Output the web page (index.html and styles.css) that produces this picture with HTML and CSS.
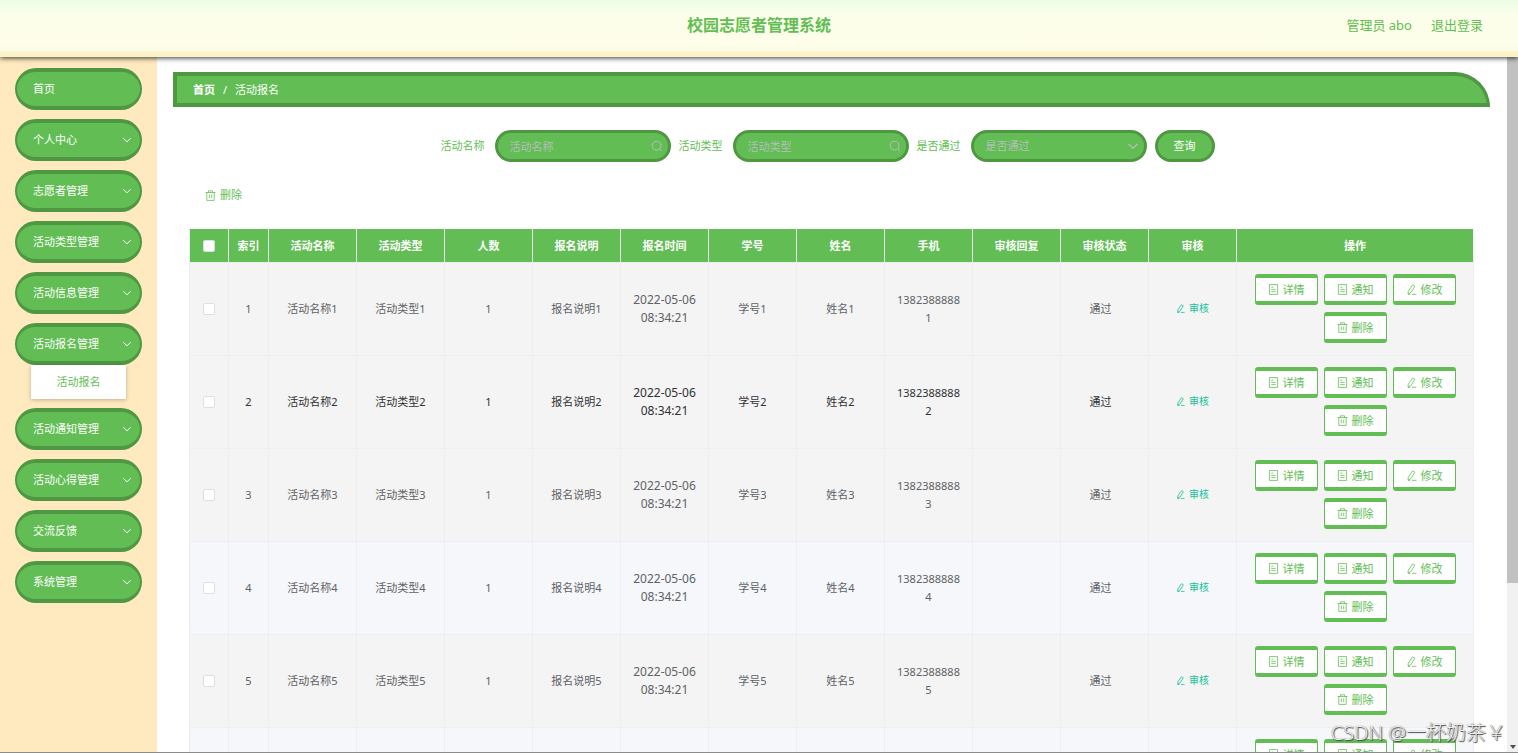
FILE: index.html
```html
<!DOCTYPE html>
<html lang="zh-CN">
<head>
<meta charset="utf-8">
<title>校园志愿者管理系统</title>
<link rel="stylesheet" href="styles.css">
</head>
<body>
<svg class="sprite" aria-hidden="true">
  <symbol id="down" viewBox="0 0 10 10"><path d="M1.2 3.2 5 6.8 8.8 3.2"/></symbol>
  <symbol id="search" viewBox="0 0 12 12"><circle cx="5.6" cy="5.6" r="4.4"/><path d="M8.8 8.8 11 11"/></symbol>
  <symbol id="trash" viewBox="0 0 11 11"><path d="M.5 2.5h10M3.5 2.5V.8h4v1.7M1.8 2.5v7.9h7.4V2.5M4.3 4.6v3.6M6.7 4.6v3.6"/></symbol>
  <symbol id="doc" viewBox="0 0 11 11"><path d="M1.4.6h8.2v9.8H1.4zM3.3 3.2h2M3.3 5.4h4.4M3.3 7.6h4.4"/></symbol>
  <symbol id="edit" viewBox="0 0 11 11"><path d="M6.7.9 8.9 2.2 4.9 8.6 2 10.2 2.3 7.2zM2 10.3h2.2M6 10.3h4.4"/></symbol>
</svg>
<header class="topbar">
  <h1 class="title">校园志愿者管理系统</h1>
  <nav class="account"><a href="#">管理员 abo</a><a href="#">退出登录</a></nav>
</header>
<div class="layout">
  <aside class="sidebar">
    <ul class="menu">
      <li><button class="menu-item" type="button">首页</button></li>
      <li><button class="menu-item" type="button">个人中心<svg class="chevron"><use href="#down"/></svg></button></li>
      <li><button class="menu-item" type="button">志愿者管理<svg class="chevron"><use href="#down"/></svg></button></li>
      <li><button class="menu-item" type="button">活动类型管理<svg class="chevron"><use href="#down"/></svg></button></li>
      <li><button class="menu-item" type="button">活动信息管理<svg class="chevron"><use href="#down"/></svg></button></li>
      <li><button class="menu-item" type="button">活动报名管理<svg class="chevron"><use href="#down"/></svg></button><a class="submenu" href="#">活动报名</a></li>
      <li><button class="menu-item" type="button">活动通知管理<svg class="chevron"><use href="#down"/></svg></button></li>
      <li><button class="menu-item" type="button">活动心得管理<svg class="chevron"><use href="#down"/></svg></button></li>
      <li><button class="menu-item" type="button">交流反馈<svg class="chevron"><use href="#down"/></svg></button></li>
      <li><button class="menu-item" type="button">系统管理<svg class="chevron"><use href="#down"/></svg></button></li>
    </ul>
  </aside>
  <main class="main">
    <nav class="breadcrumb"><a href="#"><b>首页</b></a><span>/</span><span>活动报名</span></nav>
    <form class="filters">
      <label for="name">活动名称</label>
      <div class="field"><input id="name" type="text" placeholder="活动名称"><svg class="field-icon"><use href="#search"/></svg></div>
      <label for="type">活动类型</label>
      <div class="field"><input id="type" type="text" placeholder="活动类型"><svg class="field-icon"><use href="#search"/></svg></div>
      <label for="passed">是否通过</label>
      <div class="field"><select id="passed"><option>是否通过</option></select><svg class="field-icon"><use href="#down"/></svg></div>
      <button class="query" type="button">查询</button>
    </form>
    <button class="bulk-delete" type="button"><svg class="icon"><use href="#trash"/></svg>删除</button>
    <table class="grid">
      <colgroup><col class="col-check"><col class="col-index"><col class="col-data" span="11"><col></colgroup>
      <thead><tr><th><input type="checkbox" aria-label="全选"></th><th>索引</th><th>活动名称</th><th>活动类型</th><th>人数</th><th>报名说明</th><th>报名时间</th><th>学号</th><th>姓名</th><th>手机</th><th>审核回复</th><th>审核状态</th><th>审核</th><th>操作</th></tr></thead>
      <tbody>
        <tr><td><input type="checkbox" aria-label="选择1"></td><td>1</td><td>活动名称1</td><td>活动类型1</td><td>1</td><td>报名说明1</td><td class="time">2022-05-06 08:34:21</td><td>学号1</td><td>姓名1</td><td>13823888881</td><td></td><td><span class="status">通过</span></td><td><button class="audit" type="button"><svg class="icon"><use href="#edit"/></svg>审核</button></td>
          <td><div class="actions"><button type="button"><svg class="icon"><use href="#doc"/></svg>详情</button><button type="button"><svg class="icon"><use href="#doc"/></svg>通知</button><button type="button"><svg class="icon"><use href="#edit"/></svg>修改</button><button type="button"><svg class="icon"><use href="#trash"/></svg>删除</button></div></td></tr>
        <tr class="current"><td><input type="checkbox" aria-label="选择2"></td><td>2</td><td>活动名称2</td><td>活动类型2</td><td>1</td><td>报名说明2</td><td class="time">2022-05-06 08:34:21</td><td>学号2</td><td>姓名2</td><td>13823888882</td><td></td><td><span class="status">通过</span></td><td><button class="audit" type="button"><svg class="icon"><use href="#edit"/></svg>审核</button></td>
          <td><div class="actions"><button type="button"><svg class="icon"><use href="#doc"/></svg>详情</button><button type="button"><svg class="icon"><use href="#doc"/></svg>通知</button><button type="button"><svg class="icon"><use href="#edit"/></svg>修改</button><button type="button"><svg class="icon"><use href="#trash"/></svg>删除</button></div></td></tr>
        <tr><td><input type="checkbox" aria-label="选择3"></td><td>3</td><td>活动名称3</td><td>活动类型3</td><td>1</td><td>报名说明3</td><td class="time">2022-05-06 08:34:21</td><td>学号3</td><td>姓名3</td><td>13823888883</td><td></td><td><span class="status">通过</span></td><td><button class="audit" type="button"><svg class="icon"><use href="#edit"/></svg>审核</button></td>
          <td><div class="actions"><button type="button"><svg class="icon"><use href="#doc"/></svg>详情</button><button type="button"><svg class="icon"><use href="#doc"/></svg>通知</button><button type="button"><svg class="icon"><use href="#edit"/></svg>修改</button><button type="button"><svg class="icon"><use href="#trash"/></svg>删除</button></div></td></tr>
        <tr class="tinted"><td><input type="checkbox" aria-label="选择4"></td><td>4</td><td>活动名称4</td><td>活动类型4</td><td>1</td><td>报名说明4</td><td class="time">2022-05-06 08:34:21</td><td>学号4</td><td>姓名4</td><td>13823888884</td><td></td><td><span class="status">通过</span></td><td><button class="audit" type="button"><svg class="icon"><use href="#edit"/></svg>审核</button></td>
          <td><div class="actions"><button type="button"><svg class="icon"><use href="#doc"/></svg>详情</button><button type="button"><svg class="icon"><use href="#doc"/></svg>通知</button><button type="button"><svg class="icon"><use href="#edit"/></svg>修改</button><button type="button"><svg class="icon"><use href="#trash"/></svg>删除</button></div></td></tr>
        <tr><td><input type="checkbox" aria-label="选择5"></td><td>5</td><td>活动名称5</td><td>活动类型5</td><td>1</td><td>报名说明5</td><td class="time">2022-05-06 08:34:21</td><td>学号5</td><td>姓名5</td><td>13823888885</td><td></td><td><span class="status">通过</span></td><td><button class="audit" type="button"><svg class="icon"><use href="#edit"/></svg>审核</button></td>
          <td><div class="actions"><button type="button"><svg class="icon"><use href="#doc"/></svg>详情</button><button type="button"><svg class="icon"><use href="#doc"/></svg>通知</button><button type="button"><svg class="icon"><use href="#edit"/></svg>修改</button><button type="button"><svg class="icon"><use href="#trash"/></svg>删除</button></div></td></tr>
        <tr class="tinted"><td></td><td></td><td></td><td></td><td></td><td></td><td></td><td></td><td></td><td></td><td></td><td></td><td></td>
          <td><div class="actions"><button type="button"><svg class="icon"><use href="#doc"/></svg>详情</button><button type="button"><svg class="icon"><use href="#doc"/></svg>通知</button><button type="button"><svg class="icon"><use href="#edit"/></svg>修改</button><button type="button"><svg class="icon"><use href="#trash"/></svg>删除</button></div></td></tr>
      </tbody>
    </table>
  </main>
  <div class="scrollbar"><div class="thumb"></div><div class="arrow"></div></div>
</div>
<div class="watermark">CSDN @一杯奶茶￥</div>
</body>
</html>
```
FILE: styles.css
```css
* { box-sizing: border-box; }

:root {
  --green: #62be54;
  --dark: #4f9743;
  --line: #ebeef5;
}

body {
  margin: 0;
  height: 100vh;
  overflow: hidden;
  display: flex;
  flex-direction: column;
  border-bottom: 1px solid #8c8c8c;
  color: #606266;
  font: 11px/18px "Noto Sans", "Noto Sans CJK SC", sans-serif;
}

button, input, select { font: inherit; }
button { cursor: pointer; }
a { color: inherit; text-decoration: none; }

svg {
  fill: none;
  stroke: currentColor;
  flex: none;
}
.sprite { position: absolute; width: 0; height: 0; }
.icon { width: 11px; height: 11px; stroke-width: 0.8; }

.topbar {
  position: relative;
  z-index: 1;
  flex: none;
  display: grid;
  grid-template-columns: 1fr auto 1fr;
  align-items: center;
  height: 57px;
  padding: 0 35px 7px;
  color: var(--green);
  background: linear-gradient(#ecfde6, #fbfee9 25%, #fefeea 75%, #fafce5 89%, #fdf3c6 92%, #fbf2c8);
  box-shadow: 0 1px 5px rgba(0, 0, 0, 0.8);
}
.title { grid-column: 2; margin: 0; font-size: 16px; line-height: 24px; }
.account { display: flex; justify-content: flex-end; gap: 19px; font-size: 13px; }

.layout { flex: 1; min-height: 0; display: flex; }

.sidebar { flex: none; width: 157px; padding: 11px 15px; background: #ffeabf; }
.menu {
  display: flex;
  flex-direction: column;
  gap: 9px;
  margin: 0;
  padding: 0;
  list-style: none;
}
.menu-item {
  display: flex;
  align-items: center;
  justify-content: space-between;
  width: 100%;
  height: 42px;
  padding: 0 8px 0 16px;
  border: solid var(--dark);
  border-width: 4px 2px;
  border-radius: 21px;
  color: #fff;
  background: var(--green);
}
.chevron { width: 10px; height: 10px; }
.submenu {
  display: block;
  margin: 0 16px;
  line-height: 34px;
  text-align: center;
  color: var(--green);
  background: #fff;
  box-shadow: 0 1px 4px rgba(0, 0, 0, 0.25);
}

.main { flex: 1; min-width: 0; overflow: hidden; padding: 15px 17px 0 16px; }
.breadcrumb {
  display: flex;
  align-items: center;
  gap: 8px;
  height: 35px;
  padding-left: 16px;
  border: 4px solid var(--dark);
  border-right-width: 3px;
  border-top-right-radius: 35px;
  color: #fff;
  background: var(--green);
}

.filters {
  display: flex;
  align-items: center;
  justify-content: center;
  gap: 8px;
  margin-top: 23px;
  padding-right: 8px;
  color: var(--green);
}
.filters label { min-width: 46px; }
.field { position: relative; }
.field input, .field select {
  display: block;
  width: 176px;
  height: 32px;
  padding: 0 28px 0 12px;
  border: 3px solid var(--dark);
  border-radius: 16px;
  background: var(--green);
  appearance: none;
}
.field input::placeholder { color: #b7bfbc; opacity: 1; }
.field select { color: #b7bfbc; }
.field-icon {
  position: absolute;
  top: 10px;
  right: 8px;
  width: 12px;
  height: 12px;
  color: #b7bfbc;
  pointer-events: none;
}
.query {
  width: 60px;
  height: 32px;
  padding: 0;
  border: 3px solid var(--dark);
  border-radius: 16px;
  color: #fff;
  background: var(--green);
}

.bulk-delete {
  display: flex;
  align-items: center;
  gap: 4px;
  margin: 24px 0 25px 16px;
  padding: 0 16px;
  border: 0;
  color: var(--green);
  background: none;
}

.grid {
  width: calc(100% - 32px);
  margin-left: 16px;
  border-collapse: separate;
  border-spacing: 0;
  border: solid var(--line);
  border-width: 0 1px 0 0;
  table-layout: fixed;
  text-align: center;
}
.col-check { width: 39px; }
.col-index { width: 40px; }
.col-data { width: 88px; }
.grid th, .grid td {
  padding: 11px 9px 12px;
  border: solid var(--line);
  border-width: 0 0 1px 1px;
  overflow-wrap: anywhere;
}
.grid th { height: 34px; padding: 0; color: #fff; background: var(--green); }
.grid td { background: #f4f4f4; }
.grid .tinted td { background: #f5f7fb; }
.grid .current td { color: #303133; }
.grid .time { font-size: 12px; }
.grid td:first-child, .grid td:nth-child(2) { padding-left: 0; padding-right: 0; }
.grid input {
  display: block;
  width: 12px;
  height: 12px;
  margin: 0 auto;
  border: 1px solid #dcdfe6;
  border-radius: 2px;
  background: #fff;
  appearance: none;
}
.status { margin-right: 8px; }
.audit {
  display: inline-flex;
  align-items: center;
  gap: 4px;
  padding: 0;
  border: 0;
  font-size: 10px;
  color: #20c19b;
  background: none;
}
.audit .icon { width: 9px; height: 9px; stroke-width: 1; }
.actions { display: flex; flex-wrap: wrap; justify-content: center; gap: 7px 6px; }
.actions button {
  display: flex;
  align-items: center;
  justify-content: center;
  gap: 4px;
  width: 63px;
  height: 31px;
  padding: 0;
  border: solid var(--green);
  border-width: 4px 1px;
  border-radius: 3px;
  color: var(--green);
  background: #fff;
}

.scrollbar {
  flex: none;
  display: flex;
  flex-direction: column;
  justify-content: space-between;
  align-items: center;
  width: 11px;
  padding-bottom: 3px;
  background: #f1f1f1;
}
.thumb { width: 100%; height: 76%; background: #c1c1c1; }
.arrow { border: solid transparent; border-width: 4px 3px 0; border-top-color: #505050; }

.watermark {
  position: absolute;
  right: 12px;
  bottom: 6px;
  font-size: 20px;
  line-height: 28px;
  font-weight: 300;
  color: #eee;
  text-shadow: 1px 1px 1px #444, 0 0 1px #666;
}
```
